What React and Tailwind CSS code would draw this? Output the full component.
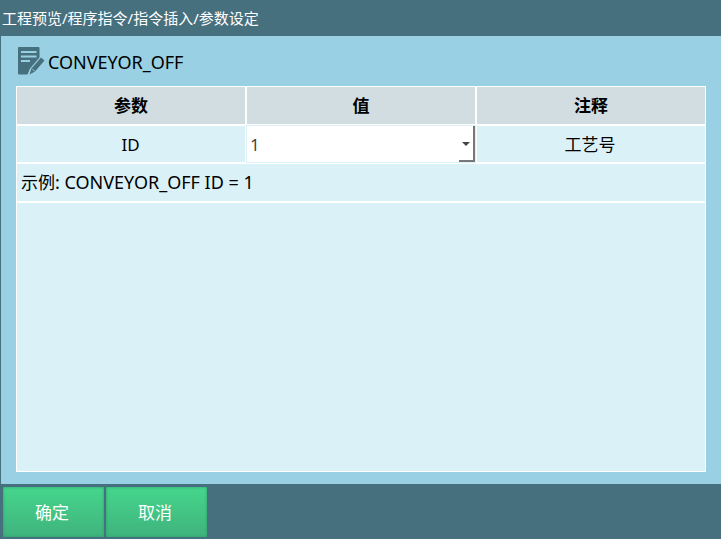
const font = { fontFamily: '"Noto Sans", "Noto Sans CJK SC", sans-serif' };

function NoteIcon() {
  return (
    <svg width="28" height="30" viewBox="0 0 28 30" className="shrink-0">
      <path d="M1 2 Q1 1 2 1 H21.5 Q22.5 1 22.5 2 V11.5 L13 22.5 L10.5 28.5 H2 Q1 28.5 1 27.5 Z" fill="#47707f" />
      <path d="M4 6 H19.5 M4 10.5 H19.5 M4 15 H13" stroke="#9ad0e3" strokeWidth="1.9" fill="none" />
      <path d="M14.5 22.5 L24 11.5 L27.5 14.5 L18 25.5 L12.5 28.5 Z" fill="#47707f" />
      <path d="M15.5 23 L18 25.5" stroke="#9ad0e3" strokeWidth="1" />
    </svg>
  );
}

function Head({ children }) {
  return <div className="flex items-center justify-center bg-[#d1dde1] text-[17px] font-bold text-black">{children}</div>;
}

export default function App() {
  return (
    <div style={font} className="flex h-[539px] w-[721px] flex-col overflow-hidden bg-[#47707f]">
      <div className="flex h-[36px] shrink-0 items-center pl-[2px] text-[15px] text-white">工程预览/程序指令/指令插入/参数设定</div>
      <div className="ml-px flex h-[448px] shrink-0 flex-col bg-[#9ad0e3] px-[15px]">
        <div className="flex h-[50px] shrink-0 items-center gap-[3px] pl-px text-[18px] text-black">
          <NoteIcon />
          <span className="pt-[2px]">CONVEYOR_OFF</span>
        </div>
        <div className="flex h-[386px] flex-col gap-[2px] border border-white bg-white">
          <div className="grid h-[37px] shrink-0 grid-cols-[228px_228px_228px] gap-[2px]">
            <Head>参数</Head>
            <Head>值</Head>
            <Head>注释</Head>
          </div>
          <div className="grid h-[36px] shrink-0 grid-cols-[228px_228px_228px] gap-[2px]">
            <div className="flex items-center justify-center bg-[#daf1f7] pt-[2px] pr-px text-[17px] text-black">ID</div>
            <div className="relative flex items-center bg-white pl-[3px] pt-[2px] text-[17px] text-[#444444] shadow-[0_0_0_1px_#daf1f7]">
              1
              <span className="absolute right-0 top-0 h-[36px] w-[16px] border-b-2 border-r-2 border-[#777777]" />
              <span className="absolute right-[5px] top-[16px] h-0 w-0 border-x-[4px] border-t-[4px] border-x-transparent border-t-[#444444]" />
            </div>
            <div className="flex items-center justify-center bg-[#daf1f7] pt-[2px] pr-[2px] text-[17px] text-black">工艺号</div>
          </div>
          <div className="flex h-[37px] shrink-0 items-center bg-[#daf1f7] pl-[4px] text-[18px] text-black">
            <span className="text-[17px]">示例</span>: CONVEYOR_OFF ID = 1
          </div>
          <div className="flex-1 bg-[#daf1f7]" />
        </div>
      </div>
      <div className="flex flex-1 gap-[2px] pl-[3px] pt-[3px]">
        {["确定", "取消"].map((t) => (
          <button key={t} className="flex h-[50px] w-[101px] items-center justify-center bg-gradient-to-b from-[#46d68c] to-[#3fb37d] pr-[3px] pt-[2px] text-[17px] text-white shadow-[inset_0_0_3px_#2f9a6e]">{t}</button>
        ))}
      </div>
    </div>
  );
}
